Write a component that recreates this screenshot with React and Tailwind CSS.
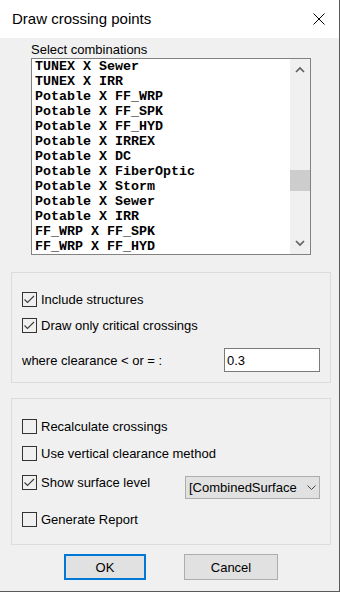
import React from "react";

const combos = [
  "TUNEX X Sewer",
  "TUNEX X IRR",
  "Potable X FF_WRP",
  "Potable X FF_SPK",
  "Potable X FF_HYD",
  "Potable X IRREX",
  "Potable X DC",
  "Potable X FiberOptic",
  "Potable X Storm",
  "Potable X Sewer",
  "Potable X IRR",
  "FF_WRP X FF_SPK",
  "FF_WRP X FF_HYD",
];

function CheckBox({ checked, label }) {
  return (
    <div className="flex items-center h-[15px]">
      <div className="w-[15px] h-[15px] border border-[#333333] bg-[#f0f0f0] shrink-0">
        {checked && (
          <svg width="13" height="13" viewBox="0 0 13 13">
            <polyline
              points="1.5,6.5 4.5,9.5 11,3"
              fill="none"
              stroke="#3c3c3c"
              strokeWidth="1.1"
            />
          </svg>
        )}
      </div>
      <span className="ml-[4px] text-[13px] leading-[15px] whitespace-nowrap">
        {label}
      </span>
    </div>
  );
}

function Chevron({ up }) {
  return (
    <svg width="10" height="7" viewBox="0 0 10 7">
      <polyline
        points={up ? "1,6 5,2 9,6" : "1,1 5,5 9,1"}
        fill="none"
        stroke="#606060"
        strokeWidth="1.7"
      />
    </svg>
  );
}

export default function App() {
  return (
    <div className="w-[340px] h-[592px] bg-[#f0f0f0] border-r border-b border-[#5a5a5a] flex flex-col text-black font-['Liberation_Sans',Arial,sans-serif] overflow-hidden">
      {/* Title bar */}
      <div className="h-[38px] bg-white flex items-start justify-between shrink-0">
        <span className="ml-[12px] mt-[10px] text-[15px] leading-[18px]">
          Draw crossing points
        </span>
        <svg
          className="mt-[13px] mr-[14px]"
          width="12"
          height="12"
          viewBox="0 0 12 12"
        >
          <path d="M0.5 0.5 L11.5 11.5 M11.5 0.5 L0.5 11.5" stroke="#000" strokeWidth="1" />
        </svg>
      </div>

      {/* Combination list */}
      <div className="ml-[31px] mt-[4px] text-[13px] leading-[16px]">
        Select combinations
      </div>
      <div className="ml-[31px] w-[280px] h-[197px] border border-[#828282] bg-white flex shrink-0">
        <div className="flex-1 overflow-hidden pl-[3px] font-['Liberation_Mono',monospace] font-bold text-[13.33px] leading-[15px]">
          {combos.map((c) => (
            <div key={c} className="whitespace-pre h-[15px]">
              {c}
            </div>
          ))}
        </div>
        <div className="w-[20px] bg-[#f0f0f0] flex flex-col">
          <div className="h-[21px] flex items-center justify-center">
            <Chevron up />
          </div>
          <div className="flex-1">
            <div className="mt-[90px] h-[21px] bg-[#cdcdcd]" />
          </div>
          <div className="h-[21px] flex items-center justify-center">
            <Chevron />
          </div>
        </div>
      </div>

      {/* Options group */}
      <div className="ml-[11px] mt-[17px] w-[320px] border border-[#dcdcdc] pl-[10px] pr-[10px] pt-[19px] pb-[10px] flex flex-col">
        <CheckBox checked label="Include structures" />
        <div className="mt-[11px]">
          <CheckBox checked label="Draw only critical crossings" />
        </div>
        <div className="mt-[15px] h-[24px] flex items-center justify-between">
          <span className="text-[13px] leading-[15px]">where clearance &lt; or = :</span>
          <div className="w-[96px] h-[24px] border border-[#7a7a7a] bg-white flex items-center pl-[2px] text-[13px] leading-[15px]">
            0.3
          </div>
        </div>
      </div>

      {/* Processing group */}
      <div className="ml-[11px] mt-[15px] w-[320px] h-[147px] border border-[#dcdcdc] pl-[10px] pr-[10px] pt-[20px] flex flex-col">
        <CheckBox label="Recalculate crossings" />
        <div className="mt-[12px]">
          <CheckBox label="Use vertical clearance method" />
        </div>
        <div className="mt-[14px] flex items-start justify-between">
          <CheckBox checked label="Show surface level" />
          <div className="mt-[1px] w-[135px] h-[23px] bg-[#e1e1e1] border border-[#adadad] flex items-center">
            <span className="ml-[3px] w-[110px] whitespace-nowrap text-[13px] leading-[15px]">
              [CombinedSurface
            </span>
            <svg className="ml-[8px]" width="9" height="5" viewBox="0 0 9 5">
              <polyline points="0.5,0.5 4.5,4.5 8.5,0.5" fill="none" stroke="#444" strokeWidth="1" />
            </svg>
          </div>
        </div>
        <div className="mt-[13px]">
          <CheckBox label="Generate Report" />
        </div>
      </div>

      {/* Buttons */}
      <div className="ml-[64px] mt-[9px] flex gap-[38px]">
        <div className="w-[82px] h-[26px] bg-[#e1e1e1] border-2 border-[#0078d7] flex items-center justify-center text-[13px] leading-[15px]">
          OK
        </div>
        <div className="w-[94px] h-[26px] bg-[#e1e1e1] border border-[#adadad] flex items-center justify-center text-[13px] leading-[15px]">
          Cancel
        </div>
      </div>
    </div>
  );
}
